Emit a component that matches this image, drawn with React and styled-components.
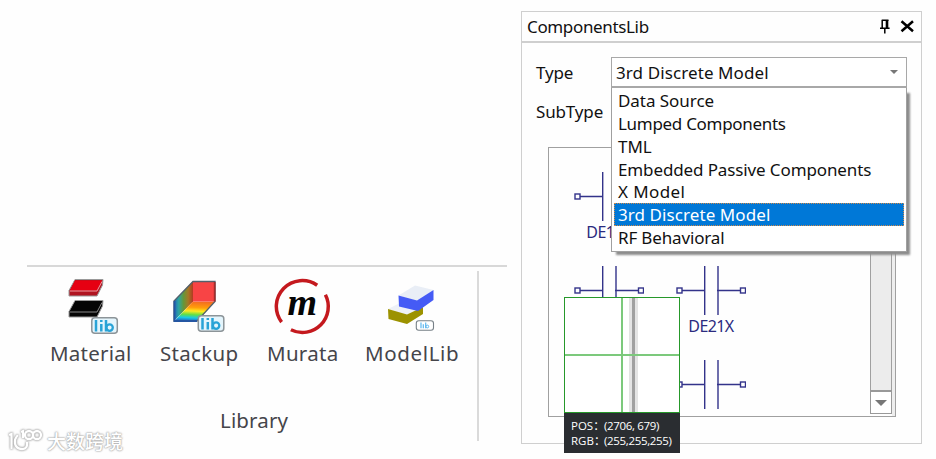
import React from "react";
import styled, { createGlobalStyle } from "styled-components";

const Global = createGlobalStyle`
  * { box-sizing: border-box; }
  body { margin: 0; background: #fff; overflow: hidden; }
`;

const Page = styled.main`
  display: flex;
  width: 936px;
  height: 459px;
  background: #fefefe;
  font-family: "Noto Sans", "Noto Sans CJK SC", sans-serif;
  color: #111;
`;

const Left = styled.div`
  width: 521px;
  padding: 265px 0 0 27px;
`;

const Ribbon = styled.section`
  width: 480px;
  height: 165px;
  border-top: 2px solid #d8d8d8;
`;

const Group = styled.div`
  width: 452px;
  height: 170px;
  margin-top: 4px;
  border-right: 2px solid #dadada;
  display: flex;
  flex-direction: column;
`;

const Tools = styled.div`
  display: flex;
  height: 134px;
`;

const Tool = styled.button`
  width: ${(p) => p.$w}px;
  margin-left: ${(p) => p.$gap}px;
  height: 100px;
  padding: 7px 0 0;
  border: 0;
  background: none;
  font: inherit;
  display: flex;
  flex-direction: column;
  align-items: flex-start;
`;

const ToolIcon = styled.svg`
  width: 60px;
  height: 60px;
  margin-left: ${(p) => p.$left}px;
  flex: none;
`;

const ToolLabel = styled.span`
  font-size: 20.5px;
  line-height: 30px;
  letter-spacing: ${(p) => p.$ls || 0}px;
  color: #45454a;
  white-space: nowrap;
`;

const GroupTitle = styled.div`
  padding-left: 193px;
  font-size: 20.5px;
  line-height: 30px;
  color: #45454a;
  letter-spacing: 0.15px;
`;

const Watermark = styled.div`
  position: absolute;
  left: 7px;
  top: 425px;
  display: flex;
  align-items: center;
  gap: 4px;
  font-size: 19px;
  line-height: 32px;
  font-family: "Noto Sans CJK SC", sans-serif;
  font-weight: 500;
  color: #fff;
  text-shadow: 0 0 2px #aaa, 0 0 2px #aaa, 0 0 1px #bbb;
`;

const WatermarkLogo = styled.svg`
  width: 36px;
  height: 24px;
  filter: drop-shadow(0 0 1px #aaa) drop-shadow(0 0 0.6px #aaa);
`;

const Panel = styled.section`
  width: 401px;
  height: 433px;
  margin-top: 11px;
  border: 1px solid #cfcfcf;
`;

const PanelHeader = styled.header`
  height: 31px;
  border-bottom: 2px solid #cfcfcf;
  display: flex;
  align-items: center;
  padding: 0 6px 0 5px;
`;

const PanelTitle = styled.h1`
  margin: 0;
  font-size: 17px;
  line-height: 28px;
  font-weight: 400;
  letter-spacing: -0.35px;
  flex: 1;
`;

const HeaderIcons = styled.svg`
  width: 38px;
  height: 20px;
`;

const PanelBody = styled.div`
  padding: 14px 14px 0;
`;

const FormRow = styled.div`
  display: flex;
  height: 39px;
  line-height: 31px;
  align-items: flex-start;
`;

const FieldLabel = styled.label`
  width: 75px;
  font-size: 17px;
  letter-spacing: -0.15px;
`;

const Select = styled.div`
  position: relative;
  width: 296px;
  height: 31px;
  border: 1px solid #a8a8a8;
  border-bottom-width: 2px;
  background: #fff;
  display: flex;
  align-items: center;
  justify-content: space-between;
  padding: 0 8px 0 4px;
  font-size: 17px;
  letter-spacing: 0.1px;
`;

const Arrow = styled.span`
  border: ${(p) => p.$size}px solid transparent;
  border-top: ${(p) => p.$size}px solid #777;
  border-bottom: 0;
`;

const Dropdown = styled.ul`
  position: absolute;
  z-index: 3;
  top: 30px;
  left: -1px;
  width: 296px;
  height: 164px;
  margin: 0;
  padding: 1px 2px 0;
  list-style: none;
  background: #fff;
  border: 1px solid #a0a0a0;
  border-top: 0;
  box-shadow: 4px 4px 2px -1px #8c8c8c;
`;

const Option = styled.li`
  height: 22.85px;
  line-height: 21.5px;
  padding-left: 3px;
  border: 1px dotted ${(p) => (p.$selected ? "#d08a4a" : "transparent")};
  background: ${(p) => (p.$selected ? "#0078d7" : "none")};
  color: ${(p) => (p.$selected ? "#fff" : "#111")};
  letter-spacing: ${(p) => p.$ls || 0}px;
  white-space: nowrap;
`;

const Browser = styled.div`
  position: relative;
  width: 348px;
  height: 270px;
  margin: 12px 0 0 12px;
  border: 1px solid #a0a0a0;
  display: flex;
  justify-content: space-between;
`;

const Parts = styled.div`
  display: grid;
  grid-template-columns: 102px 102px;
  grid-template-rows: 94px 94px 80px;
  padding-left: 25px;
  height: 268px;
  overflow: hidden;
`;

const Part = styled.div`
  width: 70px;
  display: flex;
  flex-direction: column;
  align-items: center;
  padding-top: 24px;
  font-size: 16px;
  line-height: 23px;
  letter-spacing: -0.6px;
  color: #2b2b7f;
`;

const Symbol = styled.svg`
  width: 70px;
  height: 49px;
  flex: none;
`;

const Scrollbar = styled.div`
  width: 25px;
  height: 268px;
  padding-bottom: 2px;
  border-right: 3px solid #eee;
  display: flex;
  flex-direction: column;
`;

const Track = styled.div`
  flex: 1;
  background: #ececec;
  border: 1px solid #a0a0a0;
  border-bottom: 0;
`;

const ScrollButton = styled.button`
  height: 24px;
  padding: 0;
  border: 1px solid #999;
  border-top-width: 2px;
  background: #fff;
  display: flex;
  align-items: center;
  justify-content: center;
`;

const Magnifier = styled.div`
  position: absolute;
  z-index: 4;
  left: 15px;
  top: 149px;
  width: 116px;
`;

const Lens = styled.svg`
  display: block;
  width: 116px;
  height: 116px;
`;

const Readout = styled.div`
  height: 40px;
  padding: 5px 0 0 7px;
  background: #2a2d31;
  color: #fff;
  font-family: "Open Sans", "Noto Sans CJK SC", sans-serif;
  font-size: 11.5px;
  line-height: 15px;
`;

const ReadoutLine = styled.div`
  display: flex;
  white-space: nowrap;
  letter-spacing: -0.33px;
`;

const ReadoutKey = styled.span`
  width: 33px;
  letter-spacing: 0;
`;

const LibBadge = ({ x, y }) => (
  <g transform={`translate(${x} ${y})`}>
    <rect x="0.8" y="0.8" width="25.5" height="15.5" rx="3" fill="#e4f5fc" stroke="#8c9498" strokeWidth="1.5" />
    <path d="M5 3V14.5M10.3 7V14.5M10.3 3V5M15 3V14.5" stroke="#29a3d6" strokeWidth="2.5" fill="none" />
    <circle cx="18.6" cy="10.6" r="3.2" stroke="#29a3d6" strokeWidth="2.3" fill="none" />
  </g>
);

const MaterialIcon = () => (
  <ToolIcon $left={12} viewBox="0 0 60 60">
    <path d="M13 1.5H41L40.5 7 35 18H7V12.5Z" fill="#b01420" stroke="#999" strokeWidth="1" />
    <path d="M13 2.5H40L35 12.5H8Z" fill="#e60012" />
    <path d="M8 13H35L40 3.5" stroke="#f29aa0" fill="none" />
    <path d="M13 22.5H41L40.5 28 35 39H7V33.5Z" fill="#050505" stroke="#999" strokeWidth="1" />
    <path d="M8 34H35L40 24.5" stroke="#888" fill="none" />
    <LibBadge x={29} y={39} />
  </ToolIcon>
);

const StackupIcon = () => (
  <ToolIcon $left={6} viewBox="0 0 60 60">
    <defs>
      <linearGradient id="side">
        <stop offset="0" stopColor="#2465b8" />
        <stop offset=".25" stopColor="#2ca6a0" />
        <stop offset=".5" stopColor="#659739" />
        <stop offset=".75" stopColor="#a57824" />
        <stop offset="1" stopColor="#b23b22" />
      </linearGradient>
      <linearGradient id="floor" x1=".55" y1="0" x2=".45" y2="1">
        <stop offset="0" stopColor="#f36c21" />
        <stop offset=".3" stopColor="#ff9d0a" />
        <stop offset=".48" stopColor="#ffea20" />
        <stop offset=".66" stopColor="#63df46" />
        <stop offset=".82" stopColor="#18c9e7" />
        <stop offset="1" stopColor="#2458b8" />
      </linearGradient>
    </defs>
    <path d="M27 3L8 23V43L27 23.5Z" fill="url(#side)" />
    <path d="M27 23.5H49L31 43.5H8Z" fill="url(#floor)" />
    <path d="M27 3.5H49V23.5H27Z" fill="#f84445" />
    <path d="M27 3.5H49V23.5L31 43H8V23Z" fill="none" stroke="#53606c" strokeWidth="1.3" />
    <path d="M48.7 4V23.5" stroke="#a32d2d" strokeWidth="1.8" />
    <path d="M8.5 23V43H31" stroke="#2456a2" strokeWidth="1.8" fill="none" />
    <LibBadge x={31.5} y={37} />
  </ToolIcon>
);

const MurataM = styled.text`
  font: italic 700 38px "Liberation Serif", serif;
`;

const MurataIcon = () => (
  <ToolIcon $left={6} viewBox="0 0 60 60">
    <path d="M44.2 7.3A25.9 25.9 0 0 0 8.6 44.1" stroke="#c4191e" strokeWidth="3.5" fill="none" />
    <path d="M52.4 16.7A25.9 25.9 0 0 1 17.9 51.8" stroke="#c4191e" strokeWidth="3.5" fill="none" />
    <MurataM x="29.3" y="37" textAnchor="middle" fill="#050505">m</MurataM>
  </ToolIcon>
);

const ModelIcon = () => (
  <ToolIcon $left={17} viewBox="0 0 60 60">
    <path d="M6 31L18 25 41 31 25 37Z" fill="#eef1f7" />
    <path d="M6 31L25 36.5 41 29V36L25 46 6.5 41Z" fill="#9c9200" />
    <path d="M16.5 17.5L33 7.5 51.5 12 35 23Z" fill="#e9eef6" />
    <path d="M16.5 17.5L35 22.5 51.5 12V22L36 33 17 28.5Z" fill="#455bf5" />
    <rect x="34.3" y="42.8" width="17.2" height="9.4" rx="2.5" fill="#fff" stroke="#778087" strokeWidth="1.1" />
    <path d="M39 44.5V50.3M41.3 46.3V50.3M43.7 44.5V50.3" stroke="#5eb7ef" strokeWidth="1.2" />
    <circle cx="45.3" cy="48.5" r="1.4" fill="none" stroke="#5eb7ef" />
  </ToolIcon>
);

const Capacitor = ({ name }) => (
  <Part>
    <Symbol viewBox="0 0 70 49">
      <path d="M6 24.5H29M41 24.5H64M28.7 0V49M42 0V49" stroke="#33338a" strokeWidth="1.4" fill="none" />
      <rect x="1" y="22" width="5" height="5" fill="#fff" stroke="#33338a" strokeWidth="1.4" />
      <rect x="64.5" y="22" width="5" height="5" fill="#fff" stroke="#33338a" strokeWidth="1.4" />
    </Symbol>
    {name}
  </Part>
);

const options = [
  ["Data Source", -0.05],
  ["Lumped Components", -0.3],
  ["TML", 0],
  ["Embedded Passive Components", -0.12],
  ["X Model", 0.4],
  ["3rd Discrete Model", 0.08],
  ["RF Behavioral", -0.15],
];

export default function App() {
  return (
    <Page>
      <Global />
      <Left>
        <Ribbon>
          <Group>
            <Tools>
              <Tool $w={82} $gap={23}><MaterialIcon /><ToolLabel $ls={0.25}>Material</ToolLabel></Tool>
              <Tool $w={80} $gap={28}><StackupIcon /><ToolLabel $ls={0.3}>Stackup</ToolLabel></Tool>
              <Tool $w={72} $gap={27}><MurataIcon /><ToolLabel $ls={0.3}>Murata</ToolLabel></Tool>
              <Tool $w={96} $gap={26}><ModelIcon /><ToolLabel $ls={0.65}>ModelLib</ToolLabel></Tool>
            </Tools>
            <GroupTitle>Library</GroupTitle>
          </Group>
        </Ribbon>
      </Left>
      <Panel>
        <PanelHeader>
          <PanelTitle>ComponentsLib</PanelTitle>
          <HeaderIcons viewBox="0 0 38 20">
            <path d="M4.7 3.2H11.5M5.2 3V11M3 11.2H12.6M7.8 11.5V16.5" stroke="#000" strokeWidth="1.5" fill="none" />
            <path d="M10 3V11" stroke="#000" strokeWidth="2.6" />
            <path d="M24.5 4.3L36 14.3M36 4.3L24.5 14.3" stroke="#000" strokeWidth="2.5" />
          </HeaderIcons>
        </PanelHeader>
        <PanelBody>
          <FormRow>
            <FieldLabel>Type</FieldLabel>
            <Select>
              3rd Discrete Model
              <Arrow $size={4} />
              <Dropdown>
                {options.map(([name, ls]) => (
                  <Option key={name} $ls={ls} $selected={name === "3rd Discrete Model"}>{name}</Option>
                ))}
              </Dropdown>
            </Select>
          </FormRow>
          <FormRow><FieldLabel>SubType</FieldLabel></FormRow>
          <Browser>
            <Parts>
              <Capacitor name="DE11X" />
              <Capacitor />
              <Capacitor />
              <Capacitor name="DE21X" />
              <Capacitor />
              <Capacitor />
            </Parts>
            <Scrollbar>
              <Track />
              <ScrollButton><Arrow $size={6} /></ScrollButton>
            </Scrollbar>
            <Magnifier>
              <Lens viewBox="0 0 116 116">
                <rect width="116" height="116" fill="#fff" />
                <path d="M65 0H74V116H65Z" fill="#e4e4e4" />
                <path d="M68 0H71V116H68Z" fill="#a0a0a0" />
                <path d="M58 0V116M0 58H116" stroke="#7cc97c" strokeWidth="2" />
                <rect x="0.5" y="0.5" width="115" height="115" fill="none" stroke="#26982a" />
              </Lens>
              <Readout>
                <ReadoutLine><ReadoutKey>POS：</ReadoutKey>(2706, 679)</ReadoutLine>
                <ReadoutLine><ReadoutKey>RGB：</ReadoutKey>(255,255,255)</ReadoutLine>
              </Readout>
            </Magnifier>
          </Browser>
        </PanelBody>
      </Panel>
      <Watermark>
        <WatermarkLogo viewBox="0 0 36 24" fill="none" stroke="#fff" strokeWidth="2.3">
          <path d="M2 6L4.5 5V20M11 6C6 11 7 19 14 20S20 15 20 13" />
          <path d="M14 3L16 2V9" />
          <circle cx="22" cy="6" r="4" />
          <circle cx="30" cy="6" r="4" />
        </WatermarkLogo>
        大数跨境
      </Watermark>
    </Page>
  );
}
